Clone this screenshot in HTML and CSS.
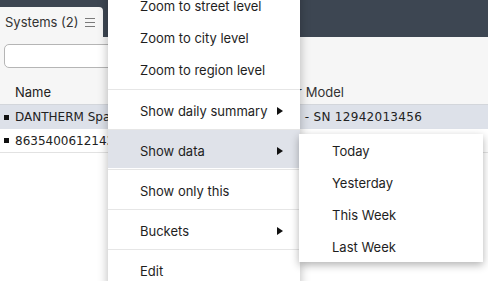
FILE: index.html
```html
<!DOCTYPE html>
<html>
<head>
<meta charset="utf-8">
<link rel="stylesheet" href="styles.css">
</head>
<body>
<div class="app">
  <div class="topbar">
    <div class="tab">
      <span class="tab-title">Systems (2)</span>
      <svg class="hamb" width="10" height="9" viewBox="0 0 10 9"><path d="M0 0.5H10M0 4.5H10M0 8.5H10" stroke="#7a7a7a" stroke-width="1.2"/></svg>
    </div>
  </div>
  <div class="toolbar">
    <div class="search"></div>
  </div>
  <div class="table">
    <div class="trow thead">
      <span class="cell-b"></span>
      <span class="cell-name">Name</span>
      <span class="cell-model">Dealer Model</span>
    </div>
    <div class="trow sel">
      <span class="cell-b"><i class="sq"></i></span>
      <span class="cell-name">DANTHERM Spabad</span>
      <span class="cell-model">Signal - SN 12942013456</span>
    </div>
    <div class="trow">
      <span class="cell-b"><i class="sq"></i></span>
      <span class="cell-name">863540061214337</span>
      <span class="cell-model">Signal - SN 86354006121</span>
    </div>
  </div>
</div>

<div class="menu">
  <div class="group top">
    <div class="item sm">Zoom to street level</div>
    <div class="item sm">Zoom to city level</div>
    <div class="item sm">Zoom to region level</div>
  </div>
  <div class="sep"></div>
  <div class="item lg">Show daily summary<i class="arrow"></i></div>
  <div class="sep"></div>
  <div class="item lg active">Show data<i class="arrow"></i></div>
  <div class="sep"></div>
  <div class="item lg">Show only this</div>
  <div class="sep"></div>
  <div class="item lg">Buckets<i class="arrow"></i></div>
  <div class="sep"></div>
  <div class="item lg">Edit</div>
</div>

<div class="submenu">
  <div class="item sm">Today</div>
  <div class="item sm">Yesterday</div>
  <div class="item sm">This Week</div>
  <div class="item sm">Last Week</div>
</div>
</body>
</html>
```
FILE: styles.css
```css
* { box-sizing: border-box; }
html, body { margin: 0; padding: 0; }
body {
  width: 488px;
  height: 281px;
  overflow: hidden;
  position: relative;
  background: #ffffff;
  font-family: Inter, "Liberation Sans", sans-serif;
  font-size: 13px;
  color: #222;
}
.app { display: flex; flex-direction: column; }
.topbar {
  height: 37px;
  background: #3d4652;
  display: flex;
  align-items: flex-end;
}
.tab {
  width: 103px;
  height: 30px;
  background: #f6f6f6;
  border-radius: 0 4px 0 0;
  display: flex;
  align-items: center;
  padding-left: 5px;
  gap: 6px;
  color: #333;
}
.hamb { margin-top: 1px; }
.toolbar {
  background: #f6f6f6;
  height: 42px;
  padding: 7px 0 0 4px;
}
.search {
  width: 260px;
  height: 24px;
  background: #fff;
  border: 1px solid #b5b5b5;
  border-radius: 5px;
}
.table { display: flex; flex-direction: column; }
.trow {
  display: flex;
  align-items: center;
  height: 24px;
  white-space: nowrap;
}
.thead {
  height: 26px;
  background: #f6f6f6;
  border-bottom: 1px solid #d3d6db;
  color: #333;
}
.sel { background: #dde1e9; }
.trow:last-child { border-bottom: 1px solid #e2e2e2; }
.cell-b {
  width: 15px;
  display: flex;
  align-items: center;
  padding-left: 4px;
}
.sq {
  display: block;
  width: 5px;
  height: 5px;
  background: #111;
}
.cell-name {
  width: 247px;
  overflow: hidden;
  font-family: "DejaVu Sans", sans-serif;
  font-size: 12px;
  color: #222;
}
.thead .cell-name, .thead .cell-model {
  font-family: Inter, "Liberation Sans", sans-serif;
  font-size: 13px;
  letter-spacing: 0;
}
.cell-model {
  font-family: "DejaVu Sans", sans-serif;
  font-size: 12px;
  letter-spacing: 0.3px;
}

.menu {
  position: absolute;
  left: 108px;
  top: -14px;
  width: 192px;
  background: #fff;
  box-shadow: 0 2px 10px rgba(0,0,0,0.28);
}
.group.top { padding: 4px 0 3px; }
.item {
  display: flex;
  align-items: center;
  padding-left: 32px;
  position: relative;
  color: #1e1e1e;
}
.item.sm { height: 32px; }
.item.lg { height: 38px; margin-bottom: 1px; padding-top: 3px; }
.item.active { background: #dfe2e9; }
.sep { height: 1px; background: #e6e6e6; }
.arrow {
  position: absolute;
  left: 169px;
  top: 50%;
  margin-top: -2px;
  width: 0; height: 0;
  border-top: 4px solid transparent;
  border-bottom: 4px solid transparent;
  border-left: 6px solid #111;
}
.submenu {
  position: absolute;
  left: 299px;
  top: 134px;
  width: 184px;
  padding: 0;
  height: 128px;
  background: #fff;
  box-shadow: 0 3px 8px rgba(0,0,0,0.3);
}
.submenu .item { padding-left: 33px; padding-top: 1px; }
```
